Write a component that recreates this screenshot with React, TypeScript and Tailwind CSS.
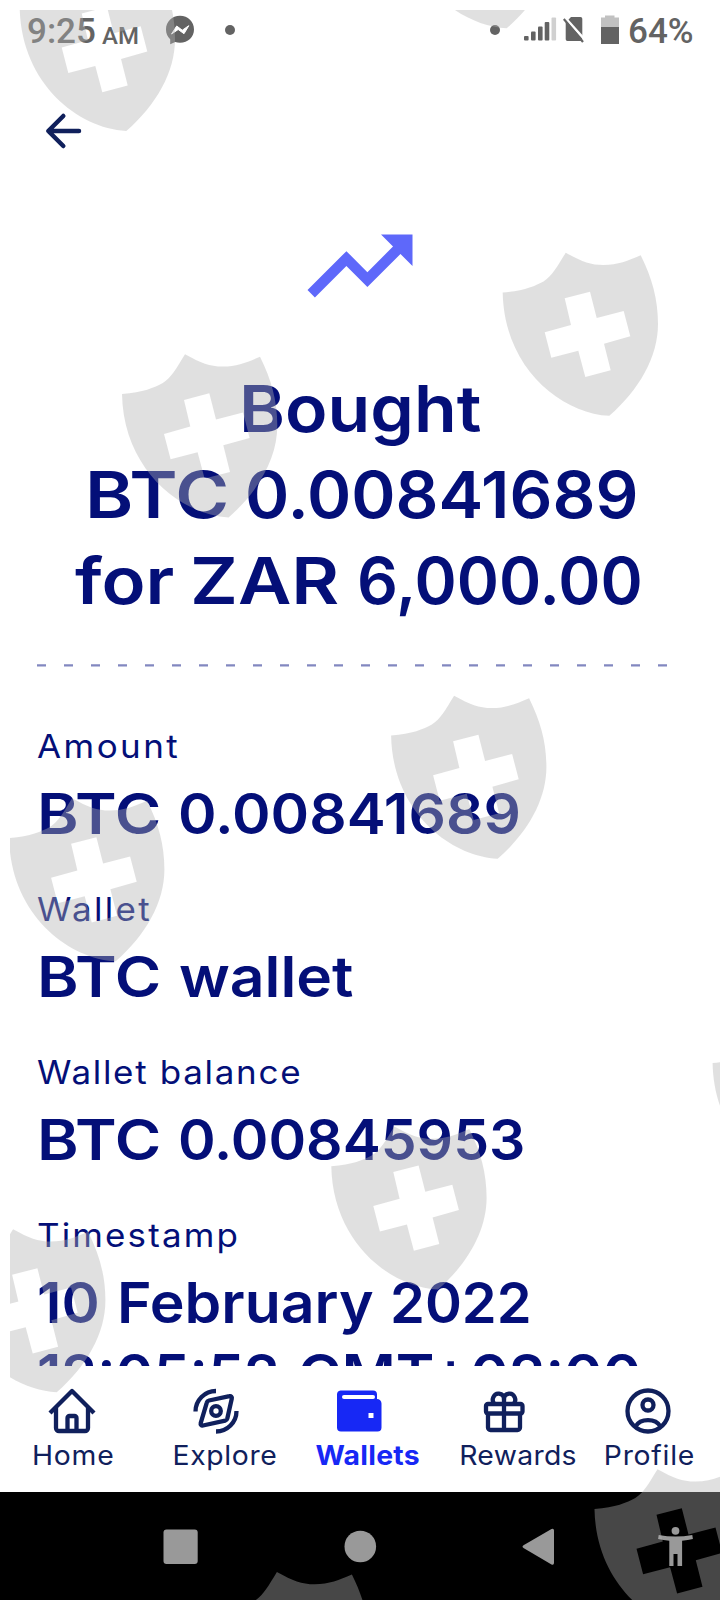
import React from 'react';
import clsx from 'clsx';

// slot is the advance of a word up to the next one, stretch widens its glyphs
type Word = { text: string; slot?: string; stretch: string };

const heading: { indent: string; words: Word[] }[] = [
  { indent: 'pl-[239px]', words: [{ text: 'Bought', stretch: 'scale-x-[1.074]' }] },
  {
    indent: 'pl-[85px]',
    words: [
      { text: 'BTC', slot: 'w-[160px]', stretch: 'scale-x-[1.128]' },
      { text: '0.00841689', stretch: 'scale-x-[1.033]' },
    ],
  },
  {
    indent: 'pl-[75px]',
    words: [
      { text: 'for', slot: 'w-[115px]', stretch: 'scale-x-[1.114]' },
      { text: 'ZAR', slot: 'w-[167px]', stretch: 'scale-x-[1.13]' },
      { text: '6,000.00', stretch: 'scale-x-[0.985]' },
    ],
  },
];

const details: { label: string; labelClass: string; lines: Word[][] }[] = [
  {
    label: 'Amount',
    labelClass: 'tracking-[2.3px]',
    lines: [
      [
        { text: 'BTC', slot: 'w-[141px]', stretch: 'scale-x-[1.128]' },
        { text: '0.00841689', stretch: 'scale-x-[1.045]' },
      ],
    ],
  },
  {
    label: 'Wallet',
    labelClass: 'tracking-[2.2px]',
    lines: [
      [
        { text: 'BTC', slot: 'w-[142px]', stretch: 'scale-x-[1.128]' },
        { text: 'wallet', stretch: 'scale-x-[1.082]' },
      ],
    ],
  },
  {
    label: 'Wallet balance',
    labelClass: 'tracking-[1.6px]',
    lines: [
      [
        { text: 'BTC', slot: 'w-[141px]', stretch: 'scale-x-[1.128]' },
        { text: '0.00845953', stretch: 'scale-x-[1.02]' },
      ],
    ],
  },
  {
    label: 'Timestamp',
    labelClass: 'tracking-[2px]',
    lines: [
      [
        { text: '10', slot: 'w-[80px]', stretch: 'scale-x-[1.035]' },
        { text: 'February', slot: 'w-[273px]', stretch: 'scale-x-[1.052]' },
        { text: '2022', stretch: 'scale-x-100' },
      ],
      [
        { text: '12:05:52', slot: 'w-[261px]', stretch: 'scale-x-[1.027]' },
        { text: 'GMT+02:00', stretch: 'scale-x-[1.045]' },
      ],
    ],
  },
];

// top-left corner of every shield, relative to the page
const shields = [
  [19, -32.8],
  [399.4, -135.5],
  [502, 252],
  [121.3, 353.6],
  [390.4, 695],
  [8.4, 797.5],
  [711.9, 1022.5],
  [330.6, 1125.8],
  [-50.6, 1228.5],
  [593.8, 1468.5],
  [213.2, 1571.3],
];

function Words({ words, className }: { words: Word[]; className?: string }) {
  return (
    <span className={clsx('flex whitespace-nowrap', className)}>
      {words.map((word) => (
        <span key={word.text} className={clsx('shrink-0', word.slot)}>
          <span className={clsx('inline-block origin-left', word.stretch)}>{word.text}</span>
        </span>
      ))}
    </span>
  );
}

function StatusBar() {
  return (
    <header className="flex h-[60px] items-center justify-between pl-[27px] pr-[27px] font-[Roboto,sans-serif] font-medium text-[#636363]">
      <div className="flex items-center">
        <span className="w-[69px] pt-[3px] text-[35px] leading-[57px]">9:25</span>
        <span className="ml-[6px] w-[36px] pt-[11px] text-[24px]">AM</span>
        <svg className="ml-[27px]" width="30" height="30" viewBox="0 0 30 30">
          <path d="M15 .8C7 .8 1 6.700 1 14.500c0 4 1.600 7.400 4.200 9.800v5l5-2.200c1.500.4 3.100.6 4.800.6 8 0 14-5.700 14-13.300S23 .8 15 .8Z" fill="currentColor" />
          <path d="m6.500 19 5.200-8 5.600 4.200 6.500-4.500-4.800 8-5.800-4.200Z" fill="#fff" stroke="#fff" strokeWidth="1" strokeLinejoin="round" />
        </svg>
        <span className="ml-[30px] size-[10px] rounded-full bg-[#636363]" />
      </div>
      <div className="flex items-center">
        <span className="mr-6 size-[10px] rounded-full bg-[#636363]" />
        <svg width="34" height="26" viewBox="0 0 34 26" fill="currentColor">
          <rect x="0" y="19" width="4.600" height="4.500" rx="1" />
          <rect x="7" y="14.500" width="4.600" height="9" rx="1" />
          <rect x="14" y="9.500" width="4.600" height="14" rx="1" />
          <rect x="20.700" y="5" width="4.600" height="18.500" rx="1" />
          <rect x="27.500" y="0.500" width="4.600" height="23" rx="1" opacity=".3" />
        </svg>
        <svg className="ml-[5px]" width="22" height="28" viewBox="0 0 22 28">
          <path d="M8 1h9.500A1.800 1.800 0 0 1 19.300 2.800v20.400a1.800 1.800 0 0 1-1.800 1.800H4.500a1.800 1.800 0 0 1-1.800-1.800V6.500Z" fill="currentColor" />
          <path d="M2 1.500 22 24" stroke="#fff" strokeWidth="2.500" />
          <path d="M.8 3 20 26" stroke="currentColor" strokeWidth="2.200" />
        </svg>
        <svg className="-mt-[2px] ml-[16px]" width="18" height="29" viewBox="0 0 18 29" fill="currentColor">
          <path d="M0 2.500h4V.5h9.500v2H18V13H0Z" opacity=".4" />
          <path d="M0 12h18v17H0Z" />
        </svg>
        <span className="ml-[9px] w-[65px] pt-[3px] text-[35px] leading-[57px]">64%</span>
      </div>
    </header>
  );
}

function Tab({ label, active, labelClass, children }: { label: string; active?: boolean; labelClass: string; children: React.ReactNode }) {
  return (
    <div className={clsx('flex w-36 flex-col items-center', active ? 'text-[#1728f5]' : 'text-[#10205c]')}>
      <svg width="48" height="48" viewBox="0 0 48 48" fill="none" stroke="currentColor" strokeWidth="4.300" strokeLinejoin="round">
        {children}
      </svg>
      <span className={clsx('mt-[5px] text-[27px] leading-8', labelClass)}>
        <span className={clsx('inline-block scale-x-105 whitespace-nowrap', active && 'font-bold')}>{label}</span>
      </span>
    </div>
  );
}

function BottomTabs() {
  return (
    <nav className="flex h-[126px] shrink-0 bg-white pt-[21px]">
      <Tab label="Home" labelClass="tracking-[0.7px] pl-[3px]">
        <path d="M2 26 24 4l22 22" />
        <path d="M8 21v20a3 3 0 0 0 3 3h26a3 3 0 0 0 3-3V21" />
        <path d="M19.500 44V31a2 2 0 0 1 2-2h5a2 2 0 0 1 2 2v13" />
      </Tab>
      <Tab label="Explore" labelClass="tracking-[0.6px] pl-[17px]">
        <path d="M24 4A20.500 20.500 0 0 0 3.500 24.500" />
        <path d="M24 44.500A20.500 20.500 0 0 0 44.500 24" />
        <path d="m17 13.500 20.500-4.300c1.600-.4 2.700.8 2.300 2.300L35.300 31.500c-.3 1.200-.9 1.800-2.100 2.100L11 38.500c-1.600.4-2.700-.8-2.300-2.300L14.800 15.600c.3-1.200 1-1.800 2.200-2.100Z" />
        <circle cx="24" cy="24" r="4.800" />
      </Tab>
      <Tab label="Wallets" active labelClass="tracking-[0.25px] pl-[16px]">
        <path
          d="M5 4h32.500a4 4 0 0 1 4 4v4.500a4.500 4.500 0 0 1 4.500 4.500v24a4 4 0 0 1-4 4H5.500a4 4 0 0 1-4-4V8a4 4 0 0 1 3.500-4Z"
          fill="currentColor"
          stroke="none"
          transform="translate(-.500 -.500)"
        />
        <path d="M8 10h29" stroke="#fff" strokeWidth="4" strokeLinecap="round" />
        <path d="M32.500 26h5v5h-5Z" fill="#fff" stroke="none" />
      </Tab>
      <Tab label="Rewards" labelClass="tracking-[0.3px] pl-[29px]">
        <rect x="6" y="17" width="36.500" height="9.500" rx="2" />
        <path d="M8 26.500v14a2.500 2.500 0 0 0 2.500 2.500h27a2.500 2.500 0 0 0 2.500-2.500v-14M24 43V12" />
        <path d="M14.500 17c-4-4 -.5-11 4.500-10.300 3.500.5 5 3 5 5.500 0-2.500 1.500-5 5-5.500 5-.7 8.500 6.300 4.500 10.300" />
      </Tab>
      <Tab label="Profile" labelClass="tracking-[0.7px] pl-[3px]">
        <circle cx="24" cy="24" r="20.500" />
        <circle cx="24" cy="18" r="5.500" />
        <path d="M11.500 39.500c5-8.500 20-8.500 25 0" />
      </Tab>
    </nav>
  );
}

function SystemNav() {
  return (
    <footer className="h-[108px] shrink-0 bg-black">
      <svg width="720" height="108" viewBox="0 0 720 108" fill="#999">
        <rect x="163.500" y="37.500" width="34.200" height="34.500" rx="3" />
        <circle cx="360.300" cy="54.500" r="15.800" />
        <path d="M551.500 37 523.500 53.200q-2 1.400 0 2.800L551.500 72.500q2.500.8 2.500-1.500V38.500q0-2.200-2.500-1.500Z" />
        <circle cx="675.500" cy="38.800" r="3.900" />
        <path d="M658.700 43q16.800 3 33.600 0l.6 4q-5 1.200-10.800 1.700V74h-4.600V62h-4v12h-4.200V48.700q-6-.5-11.200-1.700Z" />
      </svg>
    </footer>
  );
}

function ShieldOverlay() {
  return (
    <div className="pointer-events-none absolute inset-0 overflow-hidden">
      <svg width="720" height="1600" viewBox="0 0 720 1600">
        <clipPath id="inset">
          <rect x="10" y="10" width="710" height="1590" />
        </clipPath>
        <g clipPath="url(#inset)" fill="#b2b2b2" fillOpacity=".4" fillRule="evenodd">
          {shields.map(([x, y]) => (
            <path
              key={`${x}-${y}`}
              transform={`translate(${x} ${y})`}
              d="M63.700.700C80 9.500 88 13 101.500 13C116 13 126 8.500 138.700 3.200C150 26 156 47 156 72C156 105 137 138 107.300 163.800C58 161 2 115 .700 40.500C22 39 33 34 41.500 29.500C50 24 55 15 63.700.700ZM62.700 46.300L69 73L42.700 80.300L49.300 105.700L76.300 98.700L83.300 125L108.700 118.300L102 91.700L128.300 84.300L121.700 59L94.700 66L88 39.700Z"
            />
          ))}
        </g>
      </svg>
    </div>
  );
}

export default function App() {
  return (
    <div className="relative flex h-[1600px] w-[720px] flex-col overflow-hidden bg-white font-[Inter,sans-serif] text-[#040f78]">
      <StatusBar />

      <main className="min-h-0 flex-1 overflow-hidden">
        <div className="flex h-[143px] pl-[44px] pt-[52px]">
          <svg width="38" height="38" viewBox="0 0 38 38" fill="none" stroke="#10205c" strokeWidth="4.500" strokeLinecap="round" strokeLinejoin="round">
            <path d="M35 19H4.500M19.300 4 4.300 19l15 15" />
          </svg>
        </div>

        <svg className="mx-auto" width="126" height="126" viewBox="0 0 24 24" fill="#5e68fa">
          <path d="m16 6 2.290 2.290-4.880 4.880-4-4L2 16.590 3.410 18l6-6 4 4 6.300-6.290L22 12V6z" />
        </svg>

        <h1 className="mt-[37px] text-[65px] font-semibold leading-[86px]">
          {heading.map((line) => (
            <Words key={line.indent} words={line.words} className={line.indent} />
          ))}
        </h1>

        <svg className="ml-[37px] mt-[40px]" width="630" height="3" viewBox="0 0 630 3">
          <path d="M0 1.400H630" stroke="#8288c0" strokeWidth="2.200" strokeDasharray="9 18" />
        </svg>

        <dl className="mt-[55px] flex flex-col gap-[35px] pl-[37px]">
          {details.map((item) => (
            <div key={item.label} className="flex flex-col gap-2">
              <dt className={clsx('text-[33px] leading-[48px]', item.labelClass)}>
                <span className="inline-block origin-left scale-x-[1.06]">{item.label}</span>
              </dt>
              <dd className="text-[56px] font-semibold leading-[72px]">
                {item.lines.map((words) => (
                  <Words key={words[0].text} words={words} />
                ))}
              </dd>
            </div>
          ))}
        </dl>
      </main>

      <BottomTabs />
      <SystemNav />
      <ShieldOverlay />
    </div>
  );
}
